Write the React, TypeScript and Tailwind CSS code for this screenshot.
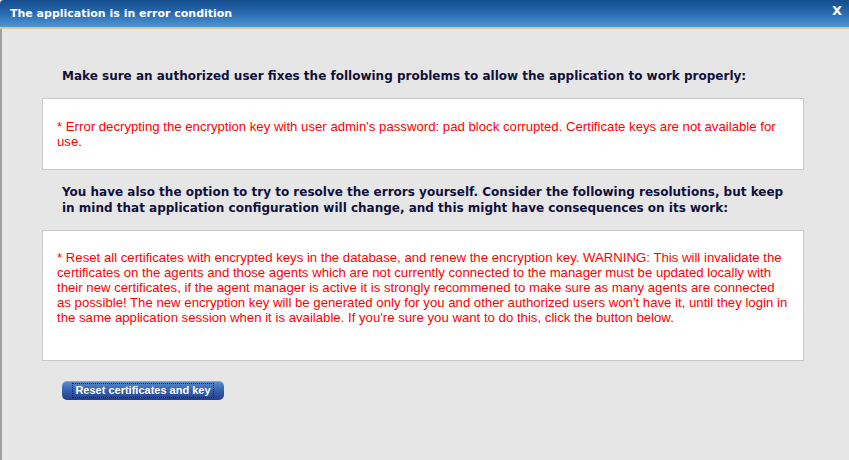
export default function App() {
  const dejavu = { fontFamily: '"DejaVu Sans", Verdana, sans-serif' };
  const arial = { fontFamily: '"Liberation Sans", Arial, sans-serif' };

  return (
    <div className="w-[849px] h-[460px] bg-[#e6e6e6] flex flex-col overflow-hidden">
      <div className="h-[27px] shrink-0 flex items-center justify-between pl-[10px] pr-[7px] bg-gradient-to-b from-[#124c8c] via-[#2a6aae] to-[#4e97d6] rounded-tl-[4px]">
        <span className="text-white font-bold text-[11px] leading-none" style={dejavu}>
          The application is in error condition
        </span>
        <span className="text-white font-bold text-[13px] leading-none -mt-[6px]" style={dejavu}>X</span>
      </div>
      <div className="h-[2px] shrink-0 bg-[#d9c99e]" />
      <div className="flex-1 border-l-2 border-[#a0a0a0] pl-[40px] pr-[45px]">
        <h1 className="mt-[39px] pl-[20px] text-[12px] leading-[16px] font-bold text-[#10103c]" style={dejavu}>
          Make sure an authorized user fixes the following problems to allow the application to work properly:
        </h1>
        <div className="mt-[14px] h-[72px] bg-white border border-[#c8c8c8] pl-[14px] pr-[13px] pt-[20px]">
          <p className="text-[13.2px] leading-[15px] text-[#ff0000]" style={arial}>
            * Error decrypting the encryption key with user admin's password: pad block corrupted. Certificate keys are not available for use.
          </p>
        </div>
        <h2 className="mt-[14px] pl-[20px] pr-[10px] text-[12px] leading-[16px] font-bold text-[#10103c]" style={dejavu}>
          You have also the option to try to resolve the errors yourself. Consider the following resolutions, but keep in mind that application configuration will change, and this might have consequences on its work:
        </h2>
        <div className="mt-[14px] h-[131px] bg-white border border-[#c8c8c8] pl-[14px] pr-[13px] pt-[19px]">
          <p className="text-[13.2px] leading-[15px] text-[#ff0000]" style={arial}>
            * Reset all certificates with encrypted keys in the database, and renew the encryption key. WARNING: This will invalidate the certificates on the agents and those agents which are not currently connected to the manager must be updated locally with their new certificates, if the agent manager is active it is strongly recommened to make sure as many agents are connected as possible! The new encryption key will be generated only for you and other authorized users won't have it, until they login in the same application session when it is available. If you're sure you want to do this, click the button below.
          </p>
        </div>
        <button
          className="mt-[20px] ml-[20px] w-[162px] h-[19px] flex items-center justify-center rounded-[5px] bg-gradient-to-b from-[#5a8fd2] via-[#3560ad] to-[#243f8c] shadow-[inset_0_1px_0_rgba(255,255,255,0.25)]"
        >
          <span
            className="border border-dotted border-[#1a1a2a] px-[2px] h-[15px] flex items-center text-white font-bold text-[11px] leading-none"
            style={arial}
          >
            Reset certificates and key
          </span>
        </button>
      </div>
    </div>
  );
}
